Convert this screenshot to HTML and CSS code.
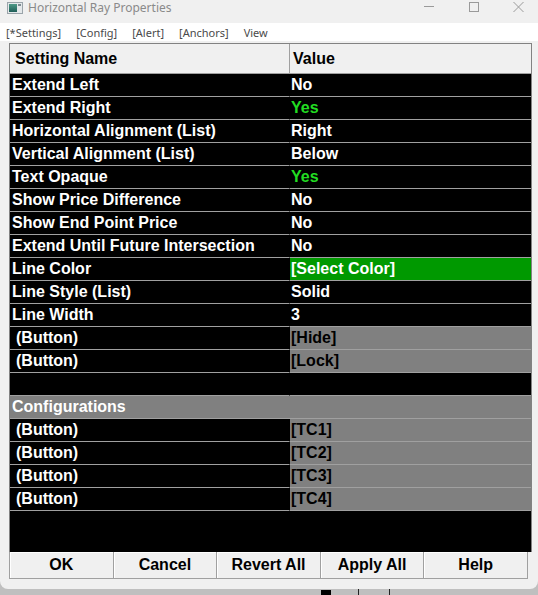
FILE: index.html
```html
<!DOCTYPE html>
<html>
<head>
    <meta charset="utf-8">
    <title>Horizontal Ray Properties</title>
<link rel="stylesheet" href="styles.css">
</head>
<body>
<div class="window">
    <div class="titlebar">
        <svg class="app-icon" width="16" height="12" viewBox="0 0 16 12">
            <defs>
                <linearGradient id="chart" x1="0" y1="0" x2="0" y2="1">
                    <stop offset="0" stop-color="#4f9a88"/>
                    <stop offset="1" stop-color="#1f5e58"/>
                </linearGradient>
            </defs>
            <rect x="0.5" y="0.5" width="15" height="11" fill="#e4e8ea" stroke="#9aa4aa"/>
            <rect x="2" y="2" width="8" height="8" fill="url(#chart)"/>
            <rect x="11" y="2" width="3" height="2" fill="#7d8b92"/>
        </svg>
        <span class="title">Horizontal Ray Properties</span>
        <div class="controls">
            <svg class="ctl-min" width="10" height="10" viewBox="0 0 10 10"><path d="M0 4.5h10" stroke="#9a9a9a"/></svg>
            <svg class="ctl-max" width="10" height="10" viewBox="0 0 10 10"><rect x="0.5" y="0.5" width="9" height="9" fill="none" stroke="#9a9a9a"/></svg>
            <svg class="ctl-close" width="11" height="10" viewBox="0 0 11 10"><path d="M0.5 0L10.5 10M10.5 0L0.5 10" stroke="#9a9a9a"/></svg>
        </div>
    </div>

    <div class="menu">
        <span>[*Settings]</span>
        <span>[Config]</span>
        <span>[Alert]</span>
        <span>[Anchors]</span>
        <span>View</span>
    </div>

    <div class="grid">
        <table class="props">
            <thead>
            <tr>
                <th class="name">Setting Name</th>
                <th class="val">Value</th>
            </tr>
            </thead>
            <tbody>
            <tr><td class="name">Extend Left</td><td>No</td></tr>
            <tr><td class="name">Extend Right</td><td class="yes">Yes</td></tr>
            <tr><td class="name">Horizontal Alignment (List)</td><td>Right</td></tr>
            <tr><td class="name">Vertical Alignment (List)</td><td>Below</td></tr>
            <tr><td class="name">Text Opaque</td><td class="yes">Yes</td></tr>
            <tr><td class="name">Show Price Difference</td><td>No</td></tr>
            <tr><td class="name">Show End Point Price</td><td>No</td></tr>
            <tr><td class="name">Extend Until Future Intersection</td><td>No</td></tr>
            <tr><td class="name">Line Color</td><td class="color">[Select Color]</td></tr>
            <tr><td class="name">Line Style (List)</td><td>Solid</td></tr>
            <tr><td class="name">Line Width</td><td>3</td></tr>
            <tr><td class="name btn-name">(Button)</td><td class="action">[Hide]</td></tr>
            <tr><td class="name btn-name">(Button)</td><td class="action">[Lock]</td></tr>
            <tr><td class="name">&nbsp;</td><td>&nbsp;</td></tr>
            <tr><td class="section" colspan="2">Configurations</td></tr>
            <tr><td class="name btn-name">(Button)</td><td class="action">[TC1]</td></tr>
            <tr><td class="name btn-name">(Button)</td><td class="action">[TC2]</td></tr>
            <tr><td class="name btn-name">(Button)</td><td class="action">[TC3]</td></tr>
            <tr><td class="name btn-name">(Button)</td><td class="action">[TC4]</td></tr>
            </tbody>
        </table>
    </div>

    <div class="buttons">
        <button>OK</button>
        <button>Cancel</button>
        <button>Revert All</button>
        <button>Apply All</button>
        <button>Help</button>
    </div>
</div>

<!-- bit of the chart window showing under the dialog -->
<div class="desk">
    <span class="bar"></span>
    <span class="tick"></span>
    <span class="tick tick-2"></span>
</div>
</body>
</html>
```

FILE: styles.css
```css
html, body {
    margin: 0;
}

body {
    width: 538px;
    height: 595px;
    overflow: hidden;
    background: #bfbfbf;
    font-family: "Liberation Sans", Arial, sans-serif;
}

.window {
    height: 589px;
    background: #f0f0f0;
    border-radius: 0 0 8px 8px;
}

/* title bar */
.titlebar {
    display: flex;
    align-items: flex-start;
    height: 23px;
}

.app-icon {
    margin: 2px 0 0 7px;
}

.title {
    margin-left: 5px;
    font-family: "Noto Sans", sans-serif;
    font-size: 12px;
    line-height: 15px;
    color: #8a8a8a;
}

.controls {
    display: flex;
    margin-left: auto;
    padding: 2px 14px 0 0;
}

.ctl-max {
    margin-left: 35px;
}

.ctl-close {
    margin-left: 34px;
}

/* tab menu */
.menu {
    display: flex;
    gap: 15px;
    height: 18px;
    padding-left: 6px;
    background: #fff;
    font-family: "Noto Sans", sans-serif;
    font-size: 11px;
    line-height: 19px;
    color: #4a4a4a;
}

/* property grid */
.grid {
    width: 521px;
    height: 508px;
    margin: 2px 0 0 9px;
    border: 1px solid #828282;
    border-bottom: none;
    background: #000;
}

.props {
    width: 521px;
    border-collapse: separate;
    border-spacing: 0;
    table-layout: fixed;
    font-size: 16px;
    font-weight: bold;
    color: #fff;
}

.props th, .props td {
    box-sizing: border-box;
    padding: 0 0 0 1px;
    border-bottom: 1px solid #a0a0a0;
    white-space: nowrap;
    overflow: hidden;
    text-align: left;
}

.props th {
    line-height: 29px;
    background: #f0f0f0;
    color: #000;
}

.props th.name {
    width: 280px;
    padding-left: 5px;
    border-right: 1px solid #a0a0a0;
}

.props th.val {
    width: 241px;
    padding-left: 3px;
}

.props td {
    line-height: 22px;
}

.props td.name {
    padding-left: 2px;
    border-right: 1px solid #000;
}

.props td.btn-name {
    padding-left: 6px;
}

.yes {
    color: #22dd22;
}

.props td.color {
    background: #009900;
}

.props td.action {
    background: #808080;
    color: #000;
}

.props td.section {
    padding-left: 2px;
    background: #808080;
}

/* dialog buttons */
.buttons {
    display: flex;
    width: 519px;
    margin-left: 9px;
}

.buttons button {
    flex: 1;
    height: 27px;
    padding: 0;
    border: 0;
    border-right: 1px solid #a0a0a0;
    border-bottom: 1px solid #a0a0a0;
    box-shadow: inset 1px 1px 0 #fff;
    background: #f0f0f0;
    font-family: "Liberation Sans", Arial, sans-serif;
    font-size: 16px;
    font-weight: bold;
    color: #000;
}

.buttons button:first-child {
    border-left: 1px solid #a0a0a0;
}

/* chart under the dialog */
.desk {
    display: flex;
    height: 6px;
    padding-left: 321px;
}

.bar {
    width: 10px;
    margin-top: 1px;
    background: #000;
}

.tick {
    width: 1px;
    margin-left: 27px;
    background: #222;
}

.tick-2 {
    margin-left: 30px;
}
```
